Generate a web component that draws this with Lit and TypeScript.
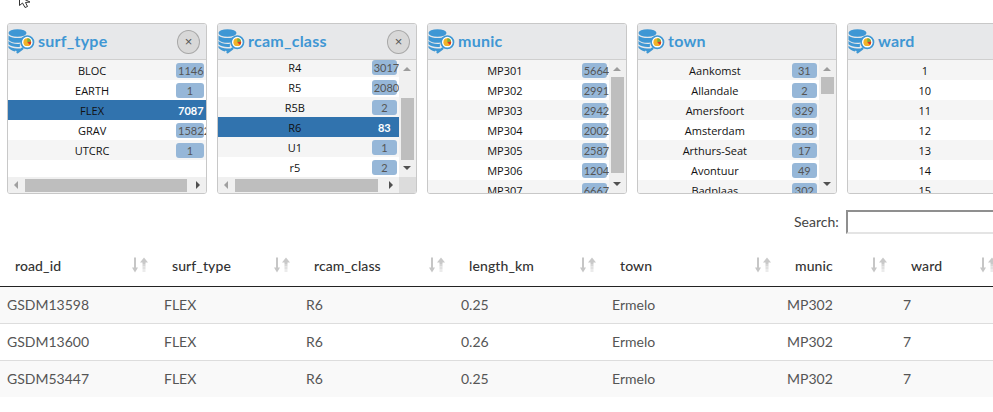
import { LitElement, html, css, svg } from "lit";
import { customElement } from "lit/decorators.js";

type Row = [string, string, boolean?];
interface Panel {
  title: string;
  closable?: boolean;
  rows: Row[];
  vbar?: [number, number];
  hbar?: [number, number];
  scrolled?: boolean;
}

const PANELS: Panel[] = [
  { title: "surf_type", closable: true, hbar: [17, 179],
    rows: [["BLOC", "1146"], ["EARTH", "1"], ["FLEX", "7087", true], ["GRAV", "15822"], ["UTCRC", "1"]] },
  { title: "rcam_class", closable: true, hbar: [17, 160], vbar: [38, 62], scrolled: true,
    rows: [["R4", "3017"], ["R5", "20803"], ["R5B", "2"], ["R6", "83", true], ["U1", "1"], ["r5", "2"]] },
  { title: "munic", vbar: [17, 96],
    rows: [["MP301", "5664"], ["MP302", "2991"], ["MP303", "2942"], ["MP304", "2002"], ["MP305", "2587"], ["MP306", "1204"], ["MP307", "6667"]] },
  { title: "town", vbar: [17, 17],
    rows: [["Aankomst", "31"], ["Allandale", "2"], ["Amersfoort", "329"], ["Amsterdam", "358"], ["Arthurs-Seat", "17"], ["Avontuur", "49"], ["Badplaas", "302"]] },
  { title: "ward", vbar: [17, 96],
    rows: [["1", "12"], ["10", "9"], ["11", "7"], ["12", "5"], ["13", "4"], ["14", "6"], ["15", "3"]] },
];

const COLS = ["road_id", "surf_type", "rcam_class", "length_km", "town", "munic", "ward"];
const ROWS = [
  ["GSDM13598", "FLEX", "R6", "0.25", "Ermelo", "MP302", "7"],
  ["GSDM13600", "FLEX", "R6", "0.26", "Ermelo", "MP302", "7"],
  ["GSDM53447", "FLEX", "R6", "0.25", "Ermelo", "MP302", "7"],
];

const dbIcon = svg`<svg class="db" width="27" height="25" viewBox="0 0 27 25" aria-hidden="true">
  <ellipse cx="9.500" cy="4" rx="9" ry="3.800" fill="#3f97d4"/>
  <path d="M.5 6.500C2.500 8.500 6 9 9.500 9c2.800 0 5.800-.5 8-1.800v1.500c-2.600 1.300-4.300 3-5.100 4.800-1 .2-2 .3-2.900.3-3.500 0-7-.8-9-2.800z" fill="#3f97d4"/>
  <path d="M.5 12c2 2 5.500 2.900 9 2.900.8 0 1.700 0 2.500-.2-.2 1-.2 2 0 3-.8.1-1.700.2-2.500.2-3.500 0-7-.9-9-2.700z" fill="#3f97d4"/>
  <path d="M.5 16.800c1.800 1.700 5 2.600 8.500 2.600h3.300c.2.500.5.900.8 1.200l-3.500 2.800-1.800-1.800-1 1C3.500 21.800 1.500 20 .5 18.800z" fill="#3f97d4"/>
  <path d="M14.500 19.500l-5 3.800" stroke="#3f97d4" stroke-width="2.200" stroke-linecap="round"/>
  <circle cx="19.300" cy="13.200" r="6.200" fill="#fff" stroke="#3f97d4" stroke-width="1.700"/>
  <circle cx="19.300" cy="13.200" r="3.900" fill="#f2b227"/>
  <path d="M19.300 13.200V9.300a3.900 3.900 0 0 1 3.800 3.200z" fill="#7fae3a"/>
  <path d="M19.300 13.200l3.800-.7a3.900 3.900 0 0 1-1.200 3.600z" fill="#d9362b"/>
</svg>`;

const sortIcon = svg`<svg class="sort" width="16" height="16" viewBox="0 0 16 16" aria-hidden="true">
  <path d="M2 .5h2v10h2L3 15.500 0 10.500h2z" fill="#c6c6c6"/>
  <path d="M12 .5l4 5h-2.500v1.500h-3V5.500H8z" fill="#c9c9c9"/>
  <rect x="10.500" y="7" width="3" height="2.500" fill="#d6d6d6"/>
  <rect x="10.500" y="9.500" width="3" height="2.500" fill="#e0e0e0"/>
  <rect x="10.500" y="12" width="3" height="3" fill="#ebebeb"/>
</svg>`;

const cursor = svg`<svg class="cursor" width="14" height="9" viewBox="0 0 14 9" aria-hidden="true">
  <path d="M1.500 -3L1.500 5.500L4.500 3L7 7.500L9.500 6.500L7.500 2.500L12 2z" fill="#fff" stroke="#333" stroke-width="1"/>
</svg>`;

@customElement("app-root")
export class AppRoot extends LitElement {
  static styles = css`
    :host {
      display: block;
      position: relative;
      width: 993px;
      height: 412px;
      overflow: hidden;
      background: #fff;
      font-family: Lato, "Open Sans", sans-serif;
      color: #333;
    }
    .cursor { position: absolute; left: 18px; top: 0; }
    .panels { display: flex; gap: 10px; padding: 23px 0 0 7px; }
    .panel {
      flex: none;
      width: 200px;
      height: 171px;
      box-sizing: border-box;
      border: 1px solid #c8c8c8;
      border-radius: 3px;
      overflow: hidden;
      display: flex;
      flex-direction: column;
      background: #fff;
    }
    .head {
      flex: none;
      height: 36px;
      box-sizing: border-box;
      border-bottom: 1px solid #cfcfcf;
      background: #e7e8ea;
      display: flex;
      align-items: center;
    }
    .db { flex: none; margin: 0 3px 0 0; }
    .title { font-size: 16px; font-weight: 700; color: #3f97d4; letter-spacing: 0.25px; flex: 1; padding-bottom: 2px; }
    .close {
      flex: none;
      width: 23px;
      height: 24px;
      margin-right: 6px;
      box-sizing: border-box;
      border: 1px solid #a8a8a8;
      border-radius: 50%;
      background: #d8d8d8;
      color: #555;
      font: 13px/20px "Liberation Sans", sans-serif;
      text-align: center;
      padding: 0;
    }
    .body { flex: 1; min-height: 0; display: flex; flex-direction: column; }
    .mid { flex: 1; min-height: 0; display: flex; }
    .list { flex: 1; min-width: 0; overflow: hidden; }
    .list.scrolled .rows { margin-top: -3px; }
    .row {
      display: flex;
      align-items: center;
      height: 20px;
      color: #111;
      overflow: hidden;
    }
    .row:nth-child(odd) { background: #f5f5f5; }
    .row:nth-child(even) { background: #fff; }
    .row.sel { background: #3173ae; }
    .label { flex: 1; min-width: 0; text-align: center; font-family: "Open Sans", sans-serif; font-size: 11px; }
    .badge {
      flex: none;
      width: 14%;
      box-sizing: border-box;
      height: 15px;
      line-height: 15px;
      margin-right: 1.1%;
      padding: 0 2px;
      border-radius: 3px;
      background: #96b7d8;
      color: #555;
      text-align: center;
      white-space: nowrap;
      font-size: 11px;
    }
    .row.sel .badge { background: none; color: #fff; font-weight: 700; }
    .vbar {
      flex: none;
      width: 17px;
      background: #f0f0f0;
      position: relative;
    }
    .thumb-v { position: absolute; left: 2px; width: 13px; background: #bebebe; }
    .up, .down, .left, .right { position: absolute; width: 0; height: 0; border-style: solid; border-color: transparent; }
    .up { top: 7px; left: 4px; border-width: 0 4px 4px; border-bottom-color: #9c9c9c; }
    .down { bottom: 7px; left: 4px; border-width: 4px 4px 0; border-top-color: #505050; }
    .hbar { flex: none; height: 16px; display: flex; background: #f0f0f0; }
    .htrack { flex: 1; position: relative; }
    .thumb-h { position: absolute; top: 2px; height: 13px; background: #bebebe; }
    .left { left: 6px; top: 4px; border-width: 4px 4px 4px 0; border-right-color: #a0a0a0; }
    .right { right: 6px; top: 4px; border-width: 4px 0 4px 4px; border-left-color: #505050; }
    .corner { flex: none; width: 17px; background: #dcdcdc; }
    .search {
      display: flex;
      align-items: center;
      gap: 7px;
      margin: 16px 0 0 794px;
      font-size: 14px;
      color: #444;
      width: 300px;
    }
    .search label { padding-bottom: 2px; }
    .search input {
      width: 200px;
      height: 24px;
      box-sizing: border-box;
      flex: none;
      margin: 0;
      padding: 0 2px;
      border-style: solid;
      border-width: 2px;
      border-color: #8f8f8f #e4e4e4 #e4e4e4 #8f8f8f;
      background: #fff;
    }
    .tablewrap { overflow: hidden; margin-top: 12px; }
    table { border-collapse: separate; border-spacing: 0; table-layout: fixed; width: 1005px; font-size: 14px; }
    th {
      height: 41px;
      box-sizing: border-box;
      padding: 0 9px 2px 15px;
      text-align: left;
      font-weight: 500;
      font-size: 14px;
      letter-spacing: 0.1px;
      color: #333;
      border-bottom: 1.5px solid #222;
    }
    .th { display: flex; justify-content: space-between; align-items: center; }
    .sort { flex: none; }
    td { height: 37px; box-sizing: border-box; padding: 0 0 2px 7px; border-bottom: 1px solid #ddd; color: #555; }
    tr:nth-child(odd) td { background: #f9f9f9; }
    tr:last-child td { border-bottom: none; height: 36px; padding-bottom: 1px; }
  `;

  private panel(p: Panel) {
    const [vt, vh] = p.vbar ?? [0, 0];
    const [hl, hr] = p.hbar ?? [0, 0];
    return html`<section class="panel">
      <header class="head">
        ${dbIcon}
        <span class="title">${p.title}</span>
        ${p.closable ? html`<button class="close">×</button>` : null}
      </header>
      <div class="body">
        <div class="mid">
          <div class="list ${p.scrolled ? "scrolled" : ""}">
            <div class="rows">
              ${p.rows.map(([l, n, sel]) => html`<div class="row ${sel ? "sel" : ""}">
                <span class="label">${l}</span><span class="badge">${n}</span>
              </div>`)}
            </div>
          </div>
          ${p.vbar ? html`<div class="vbar">
            <i class="up"></i>
            <i class="thumb-v" style="top:${vt}px;height:${vh}px"></i>
            <i class="down"></i>
          </div>` : null}
        </div>
        ${p.hbar ? html`<div class="hbar">
          <div class="htrack">
            <i class="left"></i>
            <i class="thumb-h" style="left:${hl}px;width:${hr - hl}px"></i>
            <i class="right"></i>
          </div>
          ${p.vbar ? html`<div class="corner"></div>` : null}
        </div>` : null}
      </div>
    </section>`;
  }

  render() {
    const widths = [157, 142, 155, 151, 175, 116, 109];
    return html`
      ${cursor}
      <div class="panels">${PANELS.map((p) => this.panel(p))}</div>
      <div class="search"><label>Search:</label><input type="search" /></div>
      <div class="tablewrap">
        <table>
          <colgroup>${widths.map((w) => html`<col style="width:${w}px" />`)}</colgroup>
          <thead><tr>${COLS.map((c) => html`<th><div class="th"><span>${c}</span>${sortIcon}</div></th>`)}</tr></thead>
          <tbody>${ROWS.map((r) => html`<tr>${r.map((v) => html`<td>${v}</td>`)}</tr>`)}</tbody>
        </table>
      </div>
    `;
  }
}
